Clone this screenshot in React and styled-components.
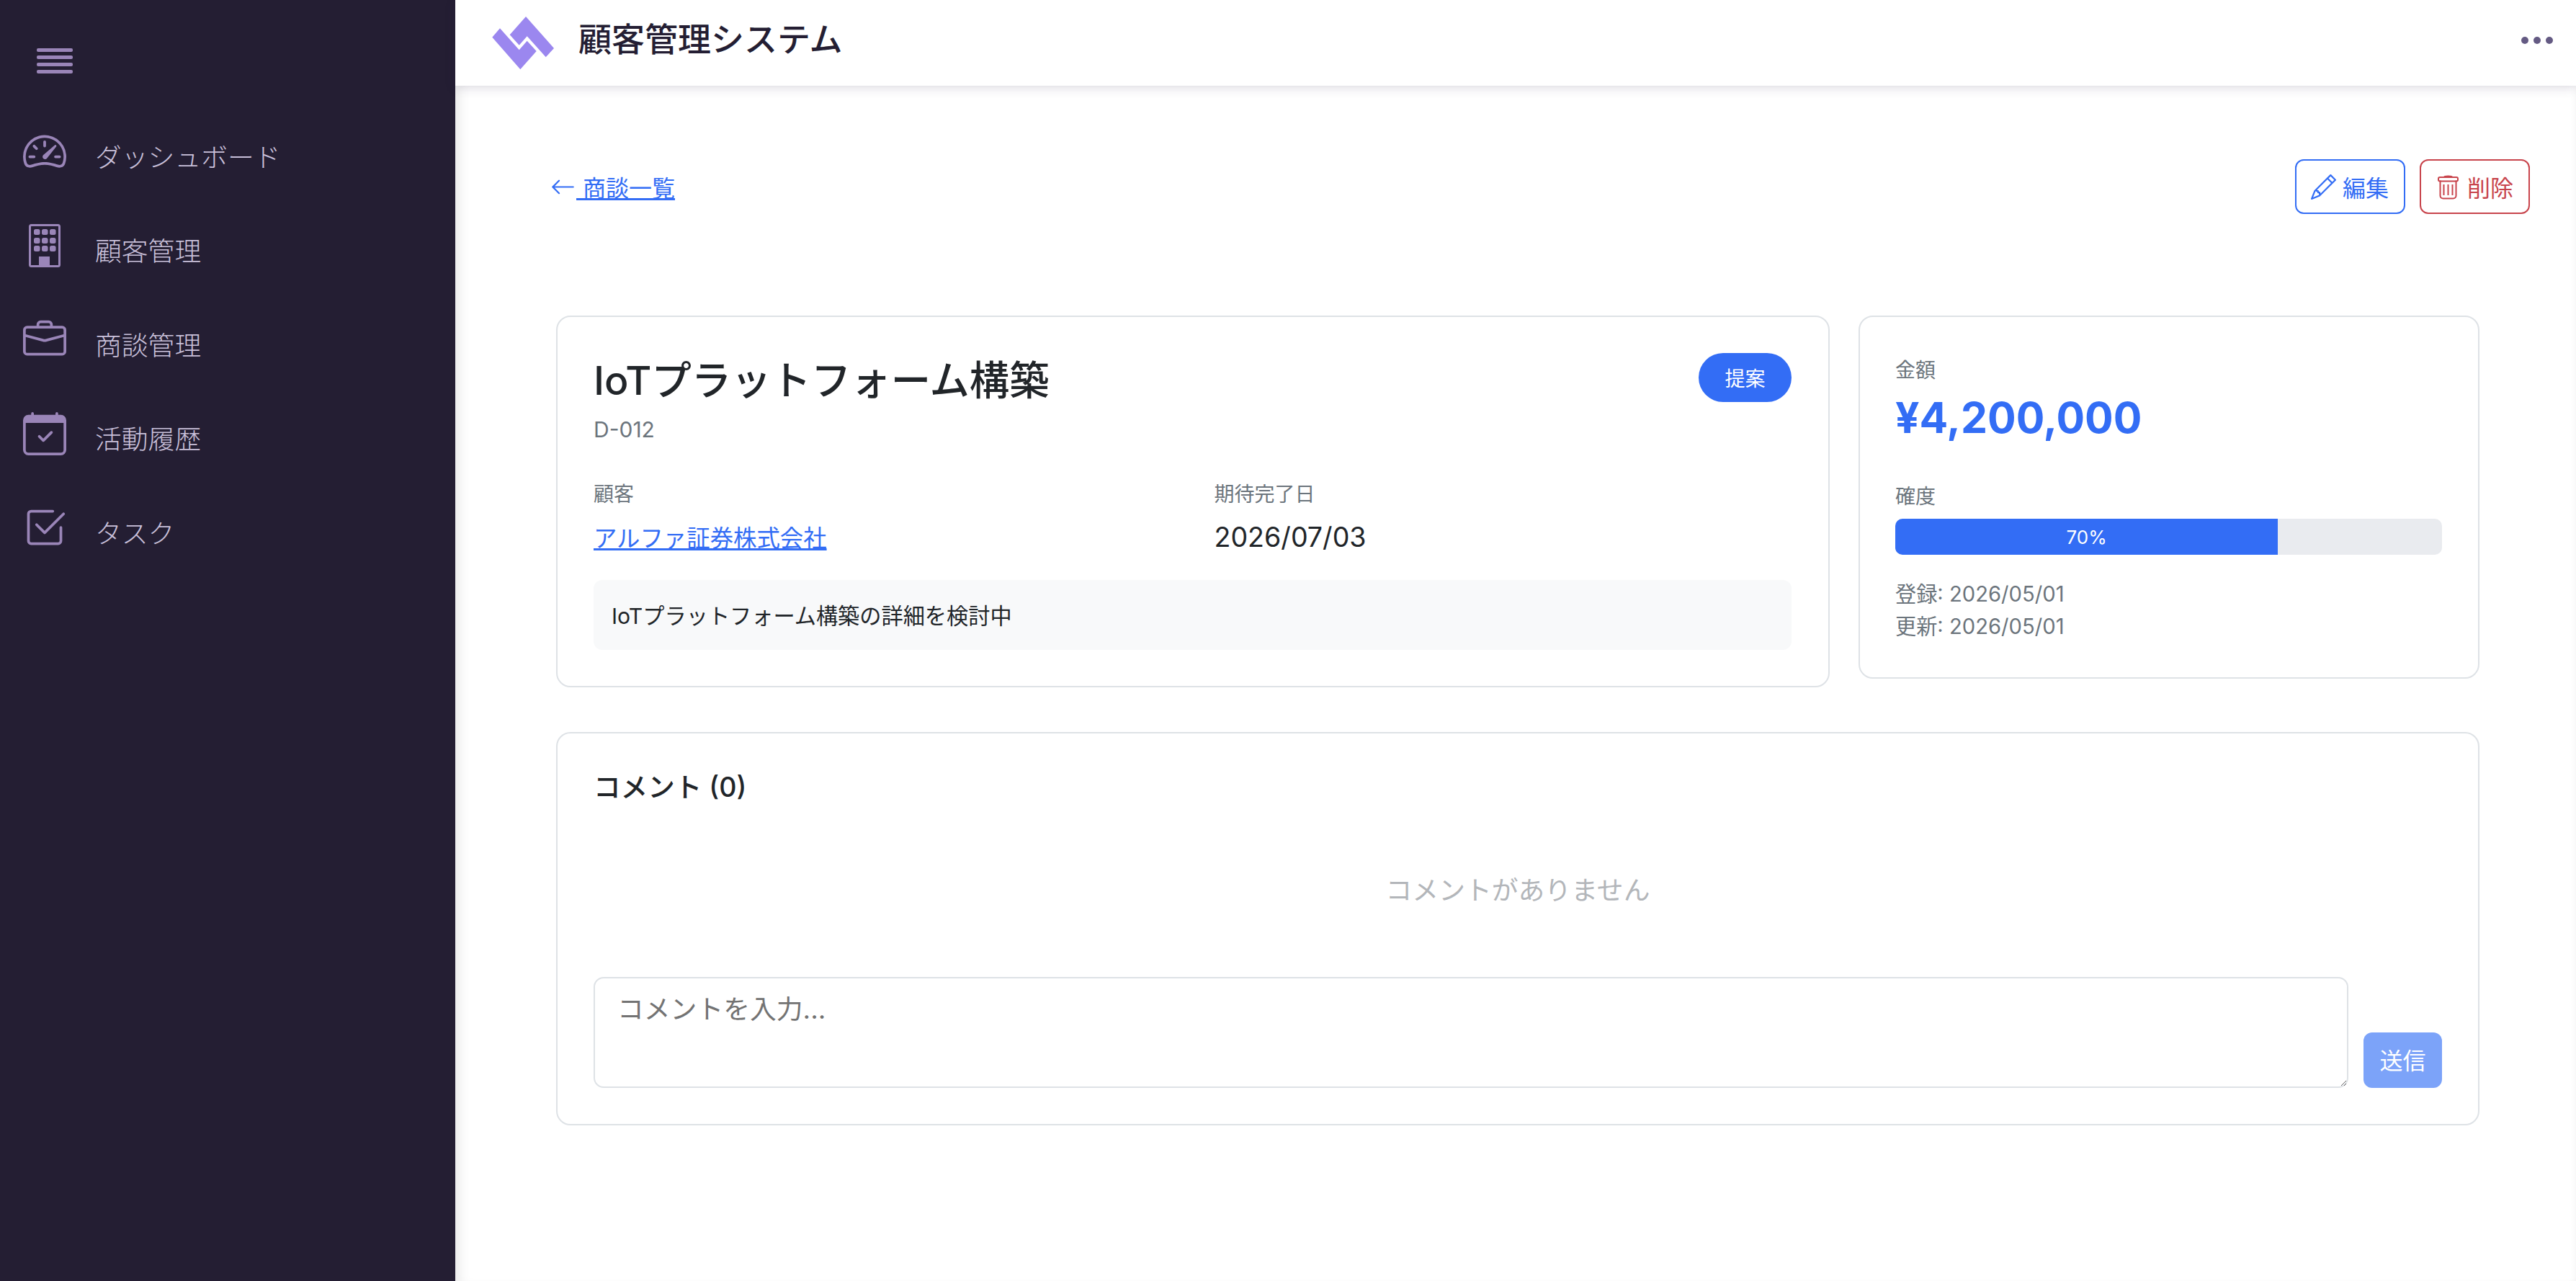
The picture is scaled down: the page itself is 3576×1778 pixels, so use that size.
import React from "react";
import styled, { createGlobalStyle } from "styled-components";
import { BsBriefcase, BsCalendarCheck, BsCheck2Square, BsPencil, BsArrowLeft } from "react-icons/bs";

const Global = createGlobalStyle`
  html, body { margin: 0; padding: 0; background: #fff; }
  * { box-sizing: border-box; }
  body { font-family: Inter, "Noto Sans CJK JP", sans-serif; color: #212529; }
`;

const Shell = styled.div`
  display: grid;
  grid-template-columns: 632px 1fr;
  height: 1778px;
  overflow: hidden;
`;

const Sidebar = styled.aside`
  background: #241e33;
  display: flex;
  flex-direction: column;
`;

const MenuToggle = styled.div`
  height: 145px;
  padding: 67px 0 0 51px;
  color: #9a85b8;
`;

const NavRow = styled.div`
  height: 130.5px;
  display: flex;
  align-items: center;
  gap: 40px;
  padding-left: 32px;
  color: #9a85b8;
`;

const NavLabel = styled.span`
  font-size: 36.8px;
  font-weight: 300;
  color: #c9c0da;
  padding-top: 11px;
`;

const Main = styled.div`
  display: flex;
  flex-direction: column;
  min-width: 0;
`;

const TopBar = styled.header`
  height: 119px;
  flex: none;
  background: #fff;
  display: flex;
  align-items: center;
  padding: 0 32px 0 51px;
  box-shadow: 0 3px 14px rgba(50, 40, 80, 0.16);
  position: relative;
  z-index: 1;
`;

const AppTitle = styled.h1`
  margin: 0 0 18px 34px;
  font-size: 46px;
  font-weight: 500;
  color: #241e33;
  flex: 1;
`;

const Dots = styled.div`
  display: flex;
  gap: 7px;
  margin-bottom: 8px;
`;

const Dot = styled.span`
  width: 10px;
  height: 10px;
  border-radius: 50%;
  background: #645a83;
`;

const Content = styled.main`
  flex: 1;
  padding: 102px 64px 0 132px;
  box-shadow: inset 16px 0 16px -10px rgba(0, 0, 0, 0.09), inset -6px 0 8px -5px rgba(0, 0, 0, 0.05);
`;

const ActionBar = styled.div`
  display: flex;
  align-items: center;
  justify-content: space-between;
  height: 76px;
`;

const BackLink = styled.a`
  font-size: 32px;
  color: #336df5;
  text-decoration: underline;
  display: inline-flex;
  align-items: center;
  white-space: pre;
  & > svg { margin-right: 1px; }
`;

const ActionGroup = styled.div`
  display: flex;
  gap: 20px;
`;

const ActionButton = styled.button`
  width: 153px;
  height: 76px;
  display: flex;
  align-items: center;
  gap: 9px;
  padding: 0 0 0 20px;
  background: #fff;
  border: 2px solid ${(p) => p.$color};
  border-radius: 12px;
  color: ${(p) => p.$color};
  font: inherit;
  font-size: 32px;
`;

const Sheet = styled.div`
  margin: 141px 70px 0 8px;
`;

const TopCards = styled.div`
  display: grid;
  grid-template-columns: 1768px 862px;
  gap: 40px;
  align-items: start;
`;

const Card = styled.section`
  background: #fff;
  border: 2px solid #dee2e6;
  border-radius: 20px;
  padding: 50px;
`;

const DealCard = styled(Card)`
  padding-right: 51px;
`;

const SideCard = styled(Card)`
  padding: 50px 50px 48px 49px;
`;

const TitleRow = styled.div`
  display: flex;
  justify-content: space-between;
  align-items: flex-start;
  height: 68px;
`;

const DealTitle = styled.h2`
  margin: 4px 0 0;
  font-size: 55.4px;
  line-height: 68px;
  font-weight: 500;
`;

const StatusBadge = styled.span`
  width: 129px;
  height: 68px;
  border-radius: 34px;
  background: #336df5;
  color: #fff;
  font-size: 28px;
  display: flex;
  align-items: center;
  justify-content: center;
`;

const DealCode = styled.div`
  margin-top: 17px;
  font-size: 30px;
  line-height: 42px;
  color: #6c757d;
`;

const Fields = styled.div`
  display: grid;
  grid-template-columns: 1fr 1fr;
  column-gap: 60px;
  margin-top: 50px;
`;

const FieldLabel = styled.div`
  font-size: 28px;
  line-height: 38px;
  color: #6c757d;
`;

const FieldValue = styled.div`
  margin-top: 17px;
  font-size: 37.6px;
  line-height: 48px;
`;

const CustomerLink = styled.a`
  font-size: 32.4px;
  color: #336df5;
  text-decoration: underline;
`;

const NoteBox = styled.div`
  margin-top: 33px;
  height: 97px;
  background: #f8f9fa;
  border-radius: 12px;
  padding: 0 25px 2px;
  display: flex;
  align-items: center;
  font-size: 30.2px;
`;

const SideLabel = styled(FieldLabel)`
  margin-top: ${(p) => p.$top}px;
`;

const Amount = styled.div`
  margin-top: 11px;
  font-size: 58.8px;
  line-height: 72px;
  font-weight: 700;
  color: #336df5;
`;

const Track = styled.div`
  margin-top: 12px;
  height: 50px;
  border-radius: 10px;
  background: #e9ebef;
  overflow: hidden;
`;

const Fill = styled.div`
  height: 100%;
  background: #336df5;
  color: #fff;
  font-size: 26px;
  display: flex;
  align-items: center;
  justify-content: center;
`;

const Stamps = styled.div`
  margin-top: 32px;
  font-size: 29.2px;
  line-height: 45px;
  color: #6c757d;
`;

const CommentCard = styled(Card)`
  margin-top: 62px;
`;

const CommentHeading = styled.h3`
  margin: 0;
  font-size: 37.6px;
  line-height: 50px;
  font-weight: 500;
`;

const EmptyNote = styled.p`
  margin: 93px 0 95px;
  font-size: 36.8px;
  line-height: 50px;
  text-align: center;
  color: #b3b6ba;
`;

const CommentForm = styled.div`
  display: flex;
  align-items: flex-end;
  gap: 21px;
`;

const CommentInput = styled.textarea`
  flex: 1;
  height: 154px;
  border: 2px solid #dee2e6;
  border-radius: 14px;
  padding: 16px 31px;
  font: inherit;
  font-size: 36.8px;
  line-height: 54px;
  display: block;
  &::placeholder { color: #737373; }
`;

const SendButton = styled.button`
  width: 109px;
  height: 77px;
  border: 0;
  border-radius: 12px;
  background: #7ca3f9;
  color: #fff;
  font: inherit;
  font-size: 32px;
  padding: 0 0 3px;
`;

const Hamburger = () => (
  <svg width="50" height="36" viewBox="0 0 50 36" fill="currentColor">
    {[0, 10, 20, 30].map((y) => (
      <rect key={y} x="0" y={y} width="50" height="5" rx="2" />
    ))}
  </svg>
);

const Gauge = () => (
  <svg width="60" height="60" viewBox="0 0 16 16" fill="currentColor">
    <path d="M8 4a.5.5 0 0 1 .5.5V6a.5.5 0 0 1-1 0V4.5A.5.5 0 0 1 8 4zM3.732 5.732a.5.5 0 0 1 .707 0l.915.914a.5.5 0 1 1-.708.708l-.914-.915a.5.5 0 0 1 0-.707zM2 10a.5.5 0 0 1 .5-.5h1.586a.5.5 0 0 1 0 1H2.5A.5.5 0 0 1 2 10zm9.5 0a.5.5 0 0 1 .5-.5h1.5a.5.5 0 0 1 0 1H12a.5.5 0 0 1-.5-.5zm.754-4.246a.389.389 0 0 0-.527-.02L7.547 9.31a.91.91 0 1 0 1.302 1.258l3.434-4.297a.389.389 0 0 0-.029-.518z" />
    <path fillRule="evenodd" d="M0 10a8 8 0 1 1 15.547 2.661c-.442 1.253-1.845 1.602-2.932 1.25C11.309 13.488 9.475 13 8 13c-1.474 0-3.31.488-4.615.911-1.087.352-2.49.003-2.932-1.25A7.988 7.988 0 0 1 0 10zm8-7a7 7 0 0 0-6.603 9.329c.203.575.923.876 1.68.63C4.397 12.533 6.358 12 8 12s3.604.532 4.923.96c.757.245 1.477-.056 1.68-.631A7 7 0 0 0 8 3z" />
  </svg>
);

const Tower = () => (
  <svg width="60" height="60" viewBox="0 0 60 60" fill="currentColor">
    <rect x="9.5" y="1.5" width="41" height="57" rx="2" fill="none" stroke="currentColor" strokeWidth="3" />
    {[7, 19, 30].map((y) =>
      [15, 26, 37].map((x) => <rect key={`${x}-${y}`} x={x} y={y} width="8.5" height="8" rx="2.5" />)
    )}
    <rect x="22" y="45" width="15" height="15" />
  </svg>
);

const Logo = () => (
  <svg width="86" height="74" viewBox="0 0 86 74" fill="#9b87ef">
    <polygon points="47,0 86,44 74.7,56.3 48.7,27.3 37.7,39.7 24.7,25.3" />
    <polygon points="0.3,28.7 11,16.3 37.7,46.3 48.7,33.7 61.7,48 39.3,73.3" />
  </svg>
);

const Bin = () => (
  <svg width="35" height="35" viewBox="0 0 35 35" fill="none" stroke="currentColor" strokeWidth="2">
    <path d="M12 3.5c0-1.5 11-1.5 11 0" />
    <rect x="4" y="4" width="27" height="5.5" rx="2" />
    <path d="M6.5 9.5v21a4 4 0 0 0 4 4h14a4 4 0 0 0 4-4v-21" transform="translate(0 -1)" />
    <path d="M11.5 14v15M17.5 14v15M23.5 14v15" />
  </svg>
);

const NAV = [
  [<Gauge />, "ダッシュボード"],
  [<Tower />, "顧客管理"],
  [<BsBriefcase size={60} />, "商談管理"],
  [<BsCalendarCheck size={60} />, "活動履歴"],
  [<BsCheck2Square size={60} />, "タスク"],
];

export default function App() {
  return (
    <Shell>
      <Global />
      <Sidebar>
        <MenuToggle><Hamburger /></MenuToggle>
        {NAV.map(([icon, label]) => (
          <NavRow key={label}>
            {icon}
            <NavLabel>{label}</NavLabel>
          </NavRow>
        ))}
      </Sidebar>
      <Main>
        <TopBar>
          <Logo />
          <AppTitle>顧客管理システム</AppTitle>
          <Dots><Dot /><Dot /><Dot /></Dots>
        </TopBar>
        <Content>
          <ActionBar>
            <BackLink href="#"><BsArrowLeft size={35} /> 商談一覧</BackLink>
            <ActionGroup>
              <ActionButton $color="#336df5"><BsPencil size={35} />編集</ActionButton>
              <ActionButton $color="#c8444c"><Bin />削除</ActionButton>
            </ActionGroup>
          </ActionBar>
          <Sheet>
            <TopCards>
              <DealCard>
                <TitleRow>
                  <DealTitle>IoTプラットフォーム構築</DealTitle>
                  <StatusBadge>提案</StatusBadge>
                </TitleRow>
                <DealCode>D-012</DealCode>
                <Fields>
                  <div>
                    <FieldLabel>顧客</FieldLabel>
                    <FieldValue><CustomerLink href="#">アルファ証券株式会社</CustomerLink></FieldValue>
                  </div>
                  <div>
                    <FieldLabel>期待完了日</FieldLabel>
                    <FieldValue>2026/07/03</FieldValue>
                  </div>
                </Fields>
                <NoteBox>IoTプラットフォーム構築の詳細を検討中</NoteBox>
              </DealCard>
              <SideCard>
                <SideLabel $top={5}>金額</SideLabel>
                <Amount>¥4,200,000</Amount>
                <SideLabel $top={54}>確度</SideLabel>
                <Track><Fill style={{ width: "70%" }}>70%</Fill></Track>
                <Stamps>
                  <div>登録: 2026/05/01</div>
                  <div>更新: 2026/05/01</div>
                </Stamps>
              </SideCard>
            </TopCards>
            <CommentCard>
              <CommentHeading>コメント (0)</CommentHeading>
              <EmptyNote>コメントがありません</EmptyNote>
              <CommentForm>
                <CommentInput placeholder="コメントを入力..." />
                <SendButton>送信</SendButton>
              </CommentForm>
            </CommentCard>
          </Sheet>
        </Content>
      </Main>
    </Shell>
  );
}
